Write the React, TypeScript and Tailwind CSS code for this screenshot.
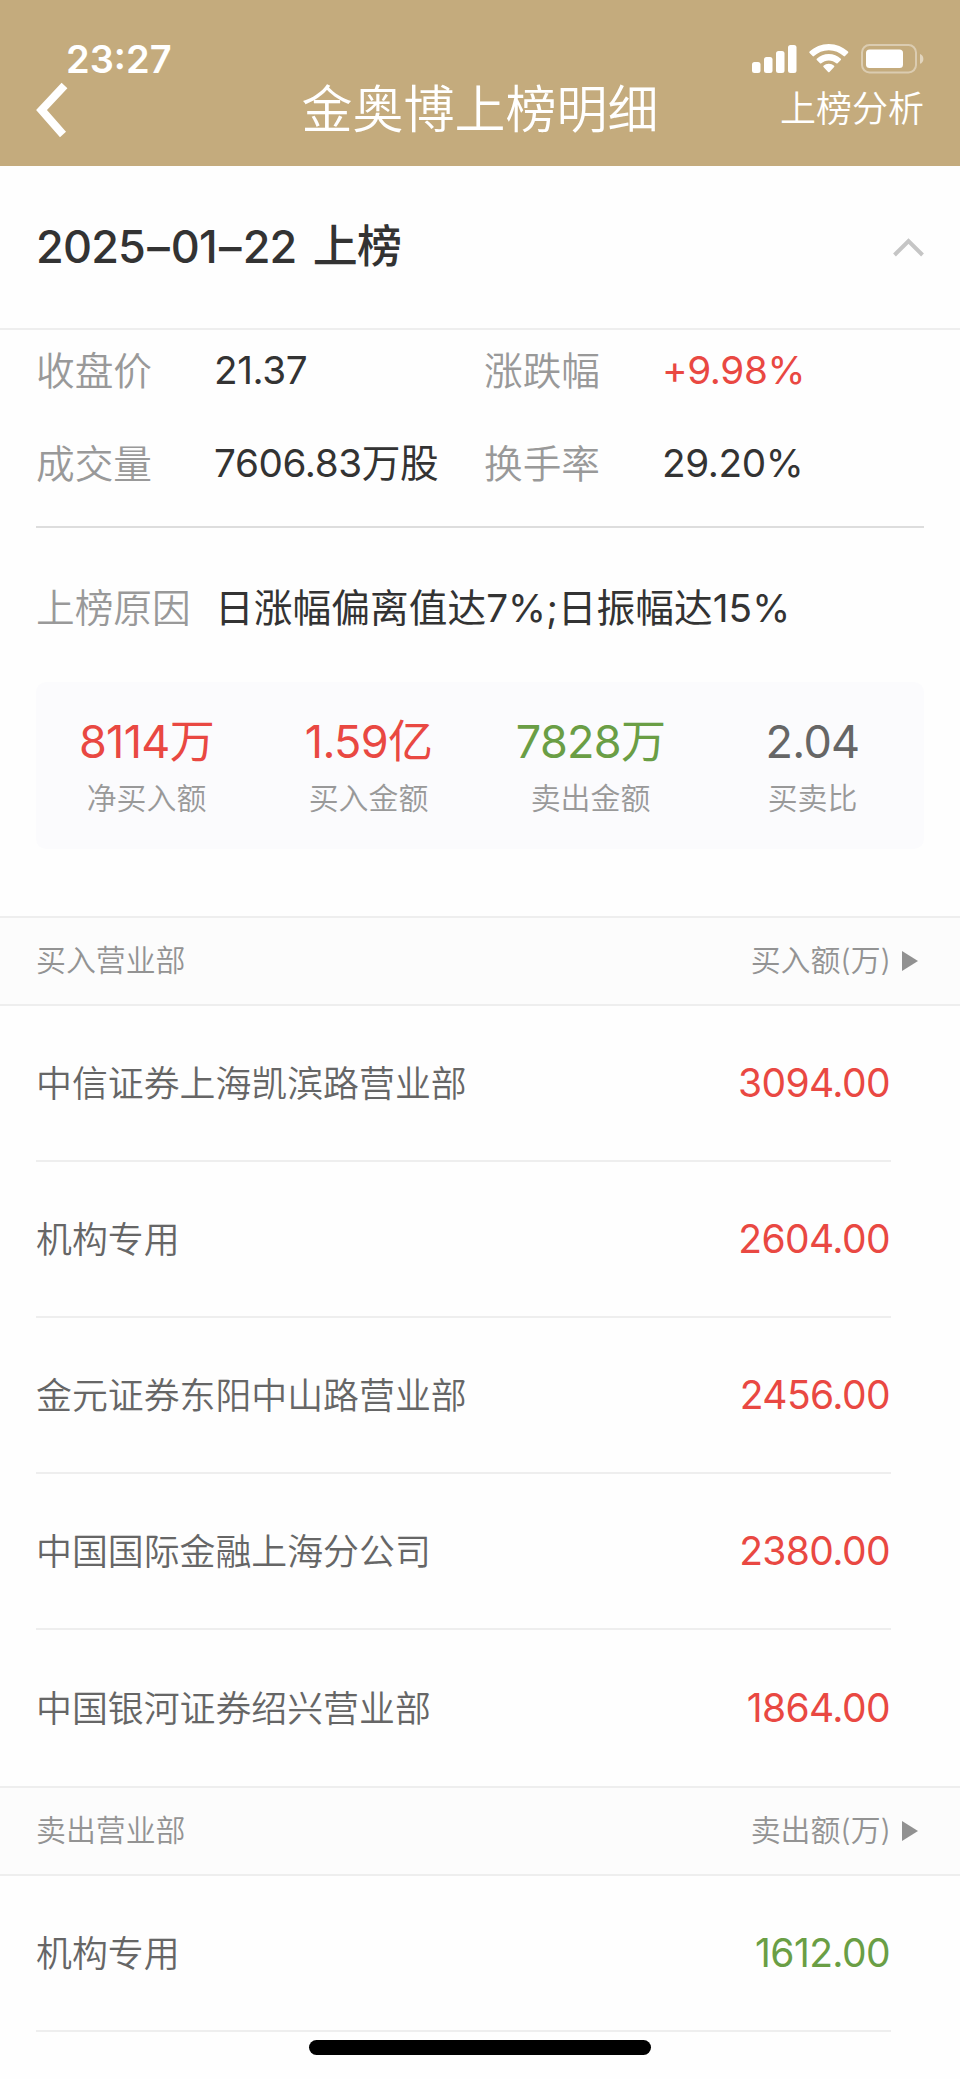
import { clsx } from "clsx";

type Tone = "up" | "down" | "normal";

interface Broker {
  name: string;
  amount: string;
}

const summary: { value: string; label: string; tone: Tone }[] = [
  { value: "8114万", label: "净买入额", tone: "up" },
  { value: "1.59亿", label: "买入金额", tone: "up" },
  { value: "7828万", label: "卖出金额", tone: "down" },
  { value: "2.04", label: "买卖比", tone: "normal" },
];

const buyers: Broker[] = [
  { name: "中信证券上海凯滨路营业部", amount: "3094.00" },
  { name: "机构专用", amount: "2604.00" },
  { name: "金元证券东阳中山路营业部", amount: "2456.00" },
  { name: "中国国际金融上海分公司", amount: "2380.00" },
  { name: "中国银河证券绍兴营业部", amount: "1864.00" },
];

const sellers: Broker[] = [{ name: "机构专用", amount: "1612.00" }];

const toneClass: Record<Tone, string> = {
  up: "text-[#e94842]",
  down: "text-[#6a9e45]",
  normal: "text-[#666666]",
};

function StatusBar() {
  return (
    <div className="flex h-[76px] items-start justify-between pt-[41px] pr-[36px] pl-[66px]">
      <span className="text-[38px] leading-[36px] font-semibold">23:27</span>
      <svg width="172" height="30" viewBox="0 0 172 30" className="mt-[3px]">
        <g fill="#fff">
          <rect x="0" y="18" width="8.5" height="11" rx="2.5" />
          <rect x="12" y="13" width="8.5" height="16" rx="2.5" />
          <rect x="24" y="7" width="8.5" height="22" rx="2.5" />
          <rect x="36" y="1" width="8.5" height="28" rx="2.5" />
          <path d="M76.8 0C84.2 0 91 2.9 96 7.6c.5.5.5 1 0 1.500l-3 3c-.4.4-1 .4-1.400 0-3.900-3.600-9-5.900-14.800-5.900s-10.900 2.300-14.800 5.900c-.4.4-1 .4-1.400 0l-3-3c-.5-.5-.5-1 0-1.500C62.600 2.900 69.400 0 76.800 0z" />
          <path d="M76.800 10c4.600 0 8.800 1.800 12 4.700.4.400.4 1 0 1.400l-3.200 3.200c-.4.4-.9.4-1.300 0-2-1.800-4.600-2.900-7.500-2.900s-5.500 1.100-7.500 2.900c-.4.4-.9.4-1.300 0l-3.200-3.200c-.4-.4-.4-1 0-1.400 3.200-2.900 7.400-4.700 12-4.700z" />
          <path d="M76.800 19.800c2 0 3.900.8 5.300 2 .4.400.4.900 0 1.300l-4.600 4.900c-.4.4-1 .4-1.400 0l-4.600-4.900c-.4-.4-.4-.9 0-1.300 1.400-1.200 3.300-2 5.300-2z" />
          <rect x="114" y="5.500" width="37" height="18.500" rx="3.500" />
        </g>
        <rect
          x="110"
          y="1"
          width="54"
          height="27.500"
          rx="7.500"
          fill="none"
          stroke="#fff"
          strokeOpacity="0.4"
          strokeWidth="2"
        />
        <path d="M168 10c2 .7 3.400 2.600 3.400 4.900s-1.400 4.200-3.400 4.900z" fill="#fff" fillOpacity="0.5" />
      </svg>
    </div>
  );
}

function StatItem({ label, value, tone }: { label: string; value: string; tone?: Tone }) {
  return (
    <>
      <dt className="pt-[1px] text-[#999999]">{label}</dt>
      <dd
        className={clsx(
          "font-normal whitespace-nowrap tracking-[-0.4px]",
          tone ? toneClass[tone] : "text-[#333333]"
        )}
      >
        {value}
      </dd>
    </>
  );
}

function BrokerSection({
  title,
  amountLabel,
  rows,
  tone,
  last,
}: {
  title: string;
  amountLabel: string;
  rows: Broker[];
  tone: Tone;
  last?: boolean;
}) {
  return (
    <section>
      <div className="flex h-[90px] items-center justify-between border-y-2 border-[#eeeeee] bg-[#fcfcfc] pr-[42px] pb-[3px] pl-[36px] text-[29.9px] text-[#939393]">
        <h2>{title}</h2>
        <div className="flex items-center">
          <span>{amountLabel}</span>
          <svg width="16" height="20" viewBox="0 0 16 20" className="mt-[2px] ml-[11px]">
            <path d="M0 0L16 10L0 20z" fill="#919191" />
          </svg>
        </div>
      </div>
      <ul className="pr-[69px] pl-[36px]">
        {rows.map((row, i) => (
          <li
            key={row.name}
            className={clsx(
              "flex h-[156px] items-center justify-between",
              (last || i < rows.length - 1) && "border-b-2 border-[#eeeeee]"
            )}
          >
            <span className="pt-[2px] text-[35.9px] text-[#666666]">{row.name}</span>
            <span
              className={clsx(
                "mr-[1px] text-[39px] font-normal tracking-[-0.6px]",
                toneClass[tone]
              )}
            >
              {row.amount}
            </span>
          </li>
        ))}
      </ul>
    </section>
  );
}

export default function App() {
  return (
    <div className="relative h-[2079px] w-[960px] overflow-hidden bg-[#fefefe] font-['Inter','Noto_Sans_CJK_SC',sans-serif] leading-[60px] font-[350]">
      <header className="h-[166px] bg-[#c4ab7d] text-white">
        <StatusBar />
        <div className="grid h-[64px] grid-cols-[1fr_auto_1fr] items-center px-[36px]">
          <svg width="32" height="56" viewBox="0 0 32 56" className="mt-[4px]">
            <path d="M28.500 3.500L5.500 28L27 52.500" fill="none" stroke="#fff" strokeWidth="8" />
          </svg>
          <h1 className="pt-[3px] text-[51px]">金奥博上榜明细</h1>
          <span className="justify-self-end pt-[1px] text-[36px]">上榜分析</span>
        </div>
      </header>

      <div className="flex h-[164px] items-center justify-between border-b-2 border-[#eeeeee] px-[36px]">
        <h2 className="text-[45px] font-medium tracking-[-0.8px] text-[#333333]">
          2025<span className="mx-[2px]">–</span>01<span className="mx-[2px]">–</span>22
          <span className="ml-[5px]"> 上榜</span>
        </h2>
        <svg width="32" height="20" viewBox="0 0 32 20">
          <path d="M2.500 18L16.500 4L30.500 18" fill="none" stroke="#c5c5c5" strokeWidth="4" />
        </svg>
      </div>

      <div className="px-[36px]">
        <dl className="grid h-[198px] grid-cols-[178px_270px_178px_1fr] content-start gap-y-[32px] border-b-2 border-[#dddddd] pt-[10px] text-[38.7px]">
          <StatItem label="收盘价" value="21.37" />
          <StatItem label="涨跌幅" value="+9.98%" tone="up" />
          <StatItem label="成交量" value="7606.83万股" />
          <StatItem label="换手率" value="29.20%" />
        </dl>

        <div className="mt-[50px] flex text-[38.7px]">
          <span className="w-[179px] text-[#999999]">上榜原因</span>
          <span className="font-normal tracking-[0.05px] text-[#333333]">
            日涨幅偏离值达7%;日振幅达15%
          </span>
        </div>

        <div className="mt-[44px] grid h-[167px] grid-cols-4 rounded-[10px] bg-[#fbfbfd] pt-[30px] text-center">
          {summary.map((item) => (
            <div key={item.label} className="-ml-[1px]">
              <div className={clsx("text-[45px] font-normal tracking-[-0.7px]", toneClass[item.tone])}>
                {item.value}
              </div>
              <div className="text-[29.9px] leading-[53px] text-[#999999]">{item.label}</div>
            </div>
          ))}
        </div>
      </div>

      <div className="mt-[67px]">
        <BrokerSection title="买入营业部" amountLabel="买入额(万)" rows={buyers} tone="up" />
        <BrokerSection title="卖出营业部" amountLabel="卖出额(万)" rows={sellers} tone="down" last />
      </div>

      {/* Home indicator */}
      <div className="absolute bottom-[24px] left-[309px] h-[15px] w-[342px] rounded-full bg-black" />
    </div>
  );
}
